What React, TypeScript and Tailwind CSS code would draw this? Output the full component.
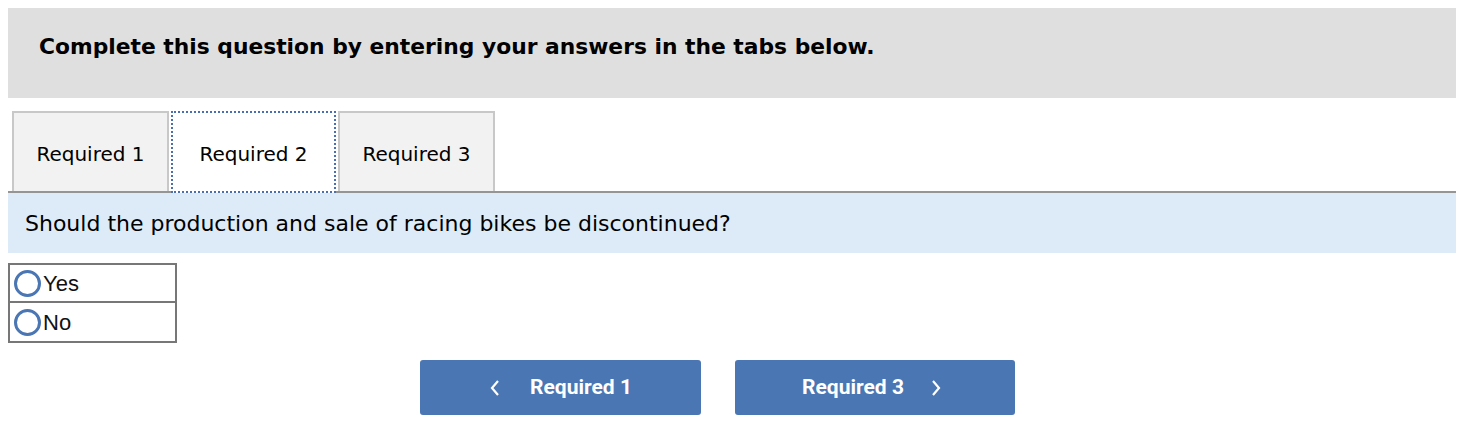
import React, { useState } from 'react';

const tabs = ['Required 1', 'Required 2', 'Required 3'];
const tabWidths = ['w-[157px]', 'w-[165px]', 'w-[157px]'];

export default function App() {
  const [active, setActive] = useState(1);
  const [answer, setAnswer] = useState<string | null>(null);

  return (
    <div className="bg-white w-[1464px] h-[430px] p-2" style={{ fontFamily: '"DejaVu Sans", Verdana, sans-serif' }}>
      {/* Header */}
      <div className="bg-[#dfdfdf] h-[90px] flex items-center pl-[31px] pb-[12px]">
        <h2 className="text-[21.8px] font-bold text-black">Complete this question by entering your answers in the tabs below.</h2>
      </div>

      {/* Tabs */}
      <div className="mt-[13px] flex items-end pl-[4px] gap-[2px] border-b-2 border-[#959595]">
        {tabs.map((t, i) => (
          <button
            key={t}
            onClick={() => setActive(i)}
            className={
              i === active
                ? `h-[82px] ${tabWidths[i]} pt-[4px] bg-white text-[20px] text-black border-2 border-dotted border-[#4a6fae] -mb-[2px]`
                : `h-[80px] ${tabWidths[i]} pt-[4px] bg-[#f2f2f2] text-[20px] text-black border-2 border-b-0 border-[#c8c8c8]`
            }
          >
            {t}
          </button>
        ))}
      </div>

      {/* Question */}
      <div className="bg-[#ddebf8] h-[60px] flex items-center pl-[17px]">
        <p className="text-[22px] text-black">Should the production and sale of racing bikes be discontinued?</p>
      </div>

      {/* Options */}
      <div className="mt-[10px] w-[169px] border-2 border-[#777777]" style={{ fontFamily: '"Liberation Sans", Arial, sans-serif' }}>
        {['Yes', 'No'].map((opt, i) => (
          <label
            key={opt}
            onClick={() => setAnswer(opt)}
            className={`flex items-center h-[38px] pl-[4px] cursor-pointer ${i === 0 ? 'border-b-2 border-[#777777]' : ''}`}
          >
            <span className="w-[27px] h-[27px] rounded-full border-[3px] border-[#4a76b3] flex items-center justify-center">
              {answer === opt && <span className="w-[13px] h-[13px] rounded-full bg-[#4a76b3]" />}
            </span>
            <span className="text-[22px] text-[#111] ml-[2px]">{opt}</span>
          </label>
        ))}
      </div>

      {/* Nav buttons */}
      <div className="mt-[17px] flex justify-center gap-[34px] pr-[29px]" style={{ fontFamily: 'Roboto, "Liberation Sans", sans-serif' }}>
        <button
          onClick={() => setActive(0)}
          className="w-[281px] h-[55px] bg-[#4a76b3] rounded-[3px] text-white text-[21px] font-bold flex items-center justify-center gap-[29px]"
        >
          <svg width="12" height="18" viewBox="0 0 12 18" fill="none" stroke="white" strokeWidth="2.2"><path d="M9 2 L3 9 L9 16" /></svg>
          <span>Required 1</span>
        </button>
        <button
          onClick={() => setActive(2)}
          className="w-[280px] h-[55px] bg-[#4a76b3] rounded-[3px] text-white text-[21px] font-bold flex items-center justify-center gap-[26px] pr-[6px]"
        >
          <span>Required 3</span>
          <svg width="12" height="18" viewBox="0 0 12 18" fill="none" stroke="white" strokeWidth="2.2"><path d="M3 2 L9 9 L3 16" /></svg>
        </button>
      </div>
    </div>
  );
}
